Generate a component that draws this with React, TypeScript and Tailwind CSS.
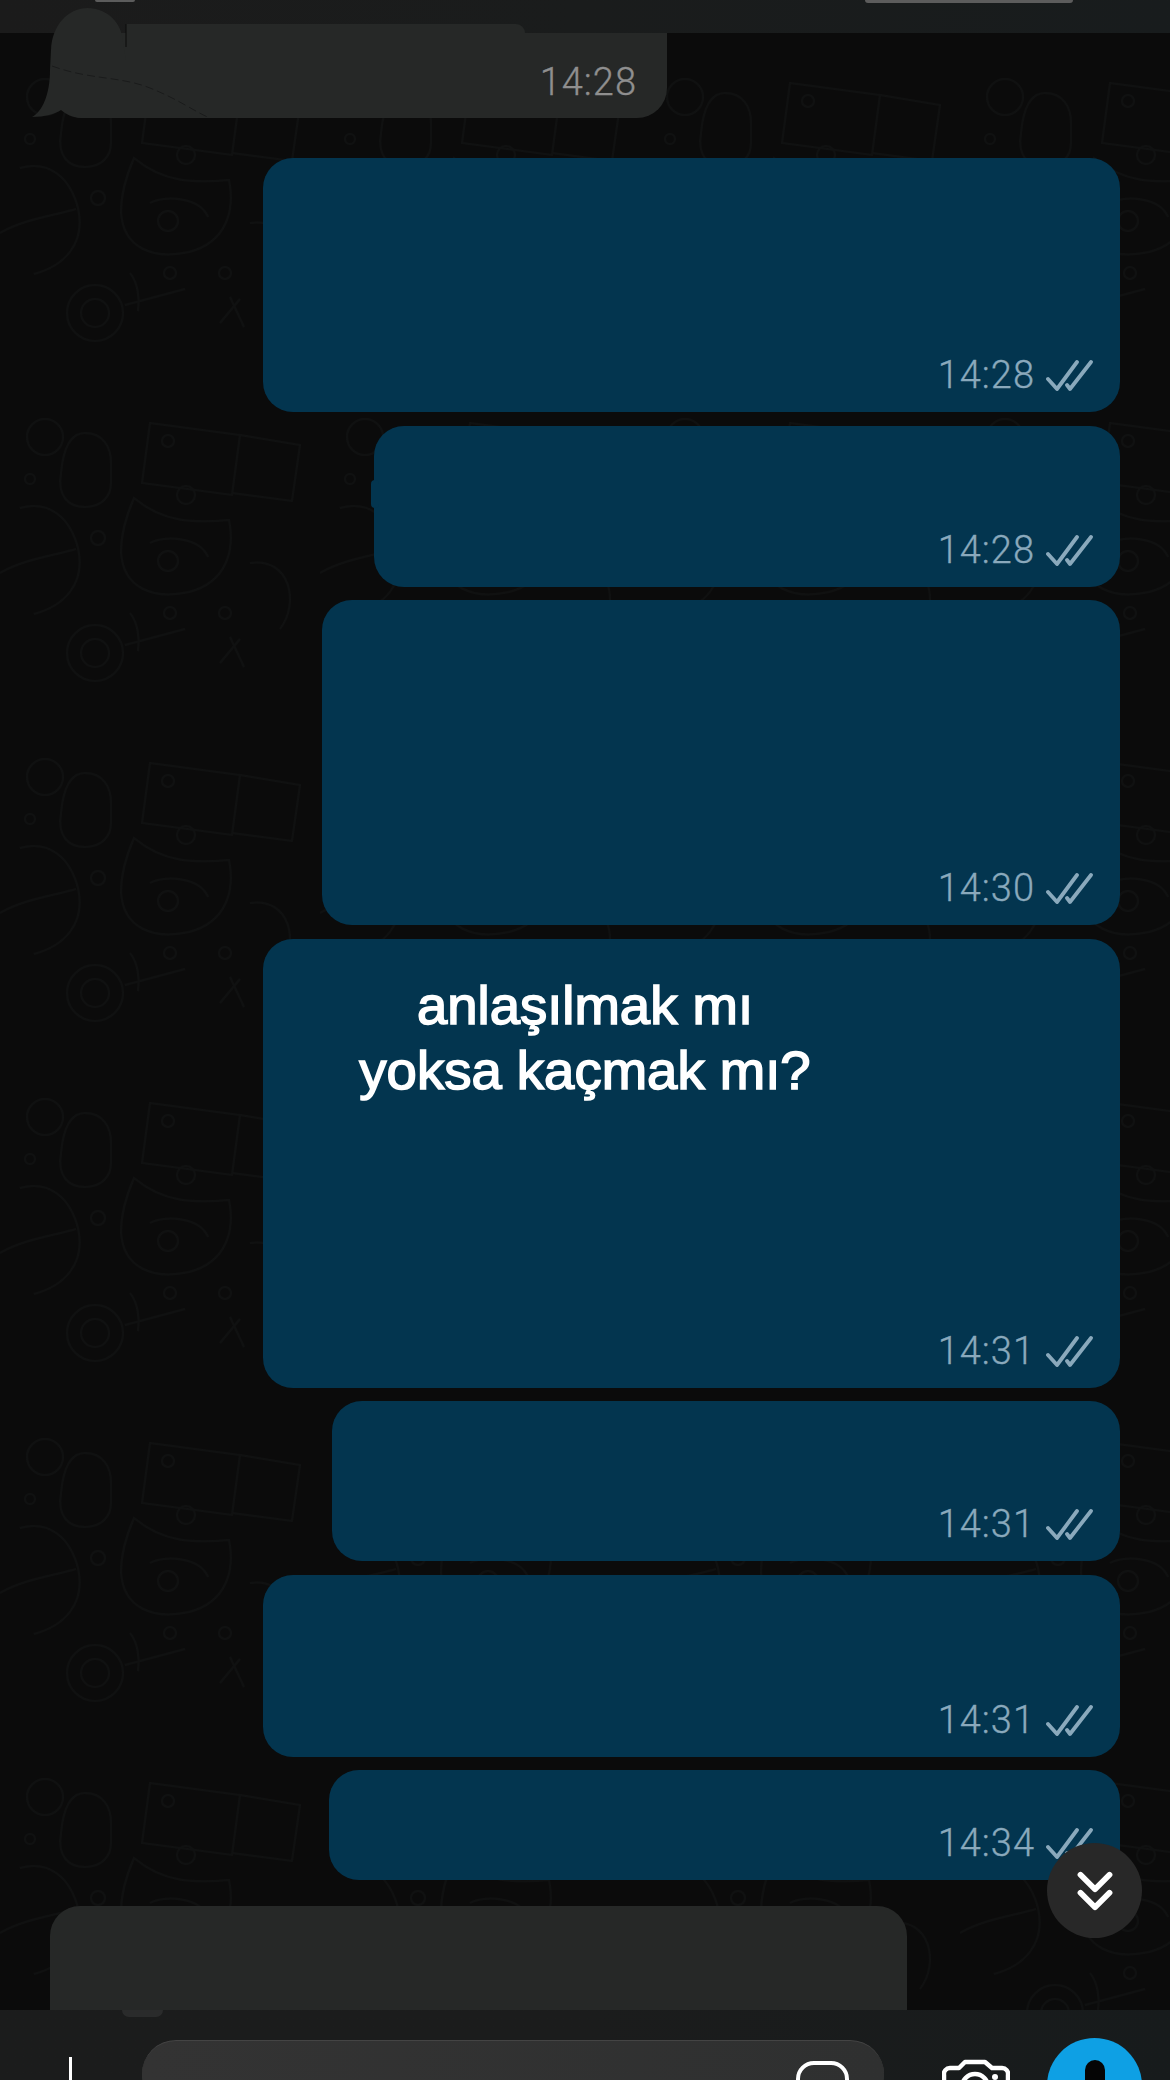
import type { ReactNode } from 'react'
import { ChevronDown } from 'lucide-react'

function Checks() {
  return (
    <svg width="47" height="31" viewBox="0 0 47 31" fill="none" stroke="#8aa9bc" strokeWidth="3.8" strokeLinecap="round" strokeLinejoin="round">
      <path d="M2 19l9 10L31 2" />
      <path d="M21 25l3 4L45 2" />
    </svg>
  )
}

function Time({ value, tick = true }: { value: string; tick?: boolean }) {
  return (
    <div className="flex items-center gap-[11px]">
      <span className={`font-['Roboto',sans-serif] font-light text-[38px] leading-[36px] tracking-[1px] [-webkit-text-stroke:0.3px_currentColor] ${tick ? 'text-[#8aa9bc]' : 'text-[#8f8f8f]'}`}>
        {value}
      </span>
      {tick && <Checks />}
    </div>
  )
}

function Wallpaper() {
  return (
    <svg className="absolute inset-0 w-full h-full" fill="none">
      <defs>
        <pattern id="doodle" width="320" height="340" patternUnits="userSpaceOnUse">
          <g stroke="#101111" strokeWidth="2">
            <path d="M150 50l90 12-8 60-90-12zM240 62l60 10-8 56-60-8" />
            <circle cx="168" cy="68" r="6" />
            <path d="M85 60c18 0 26 14 26 30v20c0 14-10 24-26 24s-28-10-24-34c2-22 8-40 24-40z" />
            <circle cx="45" cy="64" r="18" />
            <circle cx="30" cy="106" r="5" />
            <circle cx="186" cy="122" r="9" />
            <path d="M134 125c30 25 60 25 95 22 6 30-2 62-40 72-36 8-66-4-68-40 0-20 6-38 13-54z" />
            <path d="M150 170c14-8 50-6 58 14" />
            <circle cx="168" cy="188" r="10" />
            <path d="M20 135c30-8 50 10 58 40 8 36-14 58-44 66M0 200c24-14 56-18 76-24" />
            <circle cx="98" cy="165" r="7" />
            <circle cx="95" cy="280" r="28" />
            <circle cx="95" cy="280" r="14" />
            <path d="M125 272l60-16M130 240c8 10 10 26 8 38" />
            <circle cx="170" cy="240" r="6" />
            <circle cx="225" cy="240" r="6" />
            <path d="M250 190c40-6 50 40 30 66" />
            <path d="M220 290l20-24M230 264l14 30" />
          </g>
        </pattern>
      </defs>
      <rect width="100%" height="100%" fill="url(#doodle)" />
    </svg>
  )
}

function Bubble({ className, time, children }: { className: string; time: string; children?: ReactNode }) {
  return (
    <div className={`relative rounded-[30px] bg-[#03354f] flex justify-end items-end pr-[27px] pb-[19px] ${className}`}>
      {children}
      <Time value={time} />
    </div>
  )
}

export default function App() {
  return (
    <div className="w-[1170px] h-[2080px] overflow-hidden flex flex-col bg-[#0b0b0b]">
      <header className="h-[33px] shrink-0 flex justify-between items-start pl-[95px] pr-[97px] bg-gradient-to-r from-[#1b1b1b] via-[#1a1c1c] to-[#181c1d]">
        <div className="w-[40px] h-[2px] rounded-b-full bg-[#5c5c5c]" />
        <div className="w-[208px] h-[3px] rounded-b-full bg-[#5c5c5c]" />
      </header>

      <main className="relative flex-1 min-h-0">
        <Wallpaper />
        <div className="relative flex flex-col h-full">
          {/* top incoming bubble, cut off by the header */}
          <div className="relative ml-[62px] w-[605px] h-[85px] shrink-0 bg-[#262827] rounded-bl-[20px] rounded-br-[30px] flex justify-end items-end pr-[30px] pb-[18px]">
            <div className="absolute left-[64px] top-[-9px] w-[399px] h-[9px] bg-[#262827] rounded-tr-[22px]" />
            <svg className="absolute left-[-32px] top-[-25px]" width="185" height="110" viewBox="30 8 185 110" fill="#262827">
              <path d="M32 117C42 112 50 95 50 70L51 50C52 25 68 8 88 8C106 8 120 22 122 36L126 60V118H82C72 118 66 114 61 110C55 114 45 117 32 117Z" />
              <path d="M126 24V47" stroke="#0b0b0b" strokeWidth="1" />
              <path d="M52 66C90 80 120 76 150 88S195 112 210 118" fill="none" stroke="#1a1b1b" strokeWidth="1" strokeDasharray="8 4" />
            </svg>
            <Time value="14:28" tick={false} />
          </div>

          <div className="flex flex-col items-end pr-[50px]">
            <Bubble className="mt-[40px] w-[857px] h-[254px]" time="14:28" />
            <Bubble className="mt-[14px] w-[746px] h-[161px]" time="14:28">
              <div className="absolute left-[-3px] top-[54px] w-[8px] h-[28px] rounded-full bg-[#03354f]" />
            </Bubble>
            <Bubble className="mt-[13px] w-[798px] h-[325px]" time="14:30" />
            <div className="mt-[14px] w-[857px] h-[449px] rounded-[30px] bg-[#03354f] flex flex-col justify-between pr-[27px] pb-[19px]">
              <p className="w-[644px] pt-[34px] text-center font-['Liberation_Sans',sans-serif] text-[54.5px] leading-[65px] text-white [-webkit-text-stroke:1.6px_white]">
                anlaşılmak mı
                <br />
                yoksa kaçmak mı?
              </p>
              <div className="flex justify-end">
                <Time value="14:31" />
              </div>
            </div>
            <Bubble className="mt-[13px] w-[788px] h-[160px]" time="14:31" />
            <Bubble className="mt-[14px] w-[857px] h-[182px]" time="14:31" />
            <Bubble className="mt-[13px] w-[791px] h-[110px]" time="14:34" />
          </div>

          <div className="relative mt-[26px] ml-[50px] w-[857px] flex-1 bg-[#262827] rounded-t-[30px]">
            <div className="absolute left-[72px] bottom-[-7px] w-[41px] h-[7px] rounded-b-full bg-[#2a2b2b]" />
          </div>
        </div>

        <button className="absolute left-[1047px] top-[1810px] w-[95px] h-[95px] rounded-full bg-[#282828] flex flex-col items-center justify-center text-white">
          <ChevronDown size={58} strokeWidth={2.4} className="mb-[-40px]" />
          <ChevronDown size={58} strokeWidth={2.4} />
        </button>
      </main>

      <footer className="h-[70px] shrink-0 flex items-start bg-gradient-to-r from-[#1b1c1c] via-[#1b1c1c] to-[#171b1c] overflow-hidden">
        <div className="ml-[69px] mt-[47px] w-[3px] h-[23px] bg-white" />
        <div className="ml-[70px] mt-[30px] w-[742px] h-[70px] shrink-0 rounded-[34px] bg-gradient-to-r from-[#333333] to-[#2f3030] border-t border-[#444444] flex justify-end pr-[35px] pt-[20px]">
          <div className="w-[53px] h-[60px] rounded-[18px] border-[4px] border-white" />
        </div>
        <svg className="ml-[58px] mt-[49px] shrink-0" width="68" height="40" viewBox="0 0 68 40" fill="none" stroke="white" strokeWidth="4.5" strokeLinejoin="round">
          <path d="M2 40V16a6 6 0 0 1 6-7H17L23 3H43L50 9H60a6 6 0 0 1 6 7V40" />
          <circle cx="33" cy="28" r="13" />
          <circle cx="53" cy="18" r="3" fill="white" stroke="none" />
        </svg>
        <div className="ml-[37px] mt-[28px] w-[95px] h-[95px] shrink-0 rounded-full bg-[#0ea0e4] flex justify-center pt-[22px]">
          <div className="w-[20px] h-[60px] rounded-full bg-[#050505]" />
        </div>
      </footer>
    </div>
  )
}
